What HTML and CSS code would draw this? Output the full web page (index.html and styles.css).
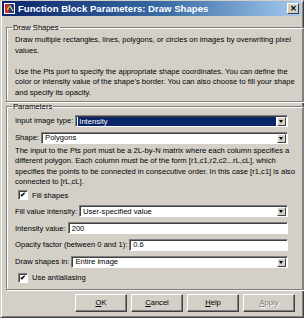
FILE: index.html
```html
<!DOCTYPE html>
<html lang="en">
<head>
    <meta charset="UTF-8">
    <title>Function Block Parameters: Draw Shapes</title>
    <link rel="stylesheet" href="styles.css">
</head>
<body>

    <div class="window">
        <div class="titlebar">
            <svg class="app-icon" width="11" height="11" viewBox="0 0 11 11">
                <rect x="0" y="0" width="11" height="11" fill="#ffffff"/>
                <rect x="1" y="1" width="9" height="9" fill="#2a3a8a"/>
                <rect x="1" y="1" width="4" height="9" fill="#c8302a"/>
                <path d="M3 7 L6 3 L9 8" stroke="#e8d040" stroke-width="1.2" fill="none"/>
            </svg>
            <span class="title">Function Block Parameters: Draw Shapes</span>
            <div class="close-btn">&#x2715;</div>
        </div>

        <div class="dialog">
            <fieldset class="group desc">
                <legend>Draw Shapes</legend>
                <div class="line">Draw multiple rectangles, lines, polygons, or circles on images by overwriting pixel</div>
                <div class="line">values.</div>
                <div class="line">&nbsp;</div>
                <div class="line">Use the Pts port to specify the appropriate shape coordinates. You can define the</div>
                <div class="line">color or intensity value of the shape's border. You can also choose to fill your shape</div>
                <div class="line">and specify its opacity.</div>
            </fieldset>

            <fieldset class="group params">
                <legend>Parameters</legend>

                <div class="row">
                    <span class="label">Input image type:</span>
                    <div class="combo selected"><span class="value">Intensity</span><span class="arrow"></span></div>
                </div>

                <div class="row">
                    <span class="label">Shape:</span>
                    <div class="combo"><span class="value">Polygons</span><span class="arrow"></span></div>
                </div>

                <div class="note">
                    <div class="line">The input to the Pts port must be a 2L-by-N matrix where each column specifies a</div>
                    <div class="line">different polygon. Each column must be of the form [r1,c1,r2,c2...rL,cL], which</div>
                    <div class="line">specifies the points to be connected in consecutive order. In this case [r1,c1] is also</div>
                    <div class="line">connected to [rL,cL].</div>
                </div>

                <div class="check-row">
                    <span class="checkbox">&#x2714;</span>
                    <span>Fill shapes</span>
                </div>

                <div class="row">
                    <span class="label">Fill value intensity:</span>
                    <div class="combo"><span class="value">User-specified value</span><span class="arrow"></span></div>
                </div>

                <div class="row">
                    <span class="label">Intensity value:</span>
                    <div class="edit">200</div>
                </div>

                <div class="row">
                    <span class="label">Opacity factor (between 0 and 1):</span>
                    <div class="edit">0.6</div>
                </div>

                <div class="row">
                    <span class="label">Draw shapes in:</span>
                    <div class="combo"><span class="value">Entire image</span><span class="arrow"></span></div>
                </div>

                <div class="check-row">
                    <span class="checkbox">&#x2714;</span>
                    <span>Use antialiasing</span>
                </div>
            </fieldset>

            <div class="buttons">
                <button class="btn"><u>O</u>K</button>
                <button class="btn"><u>C</u>ancel</button>
                <button class="btn"><u>H</u>elp</button>
                <button class="btn disabled"><u>A</u>pply</button>
            </div>
        </div>
    </div>

</body>
</html>
```

FILE: styles.css
```css
* {
    margin: 0;
    padding: 0;
    box-sizing: border-box;
    font-family: 'Liberation Sans', Arial, sans-serif;
}

body {
    width: 304px;
    height: 318px;
    background-color: #d4d0c8;
    overflow: hidden;
}

.window {
    width: 304px;
    height: 318px;
    display: flex;
    flex-direction: column;
    background-color: #d4d0c8;
    border: 1px solid #d4d0c8;
    border-right-color: #404040;
    border-bottom-color: #404040;
    box-shadow: inset 1px 1px 0 #ffffff, inset -1px -1px 0 #808080;
    padding: 0 2px 2px 1px;
}

.titlebar {
    flex: none;
    height: 15px;
    display: flex;
    align-items: center;
    padding: 0 2px 0 2px;
    background: linear-gradient(to right, #0a246a 0%, #3a6ea5 55%, #a6caf0 100%);
}

.app-icon {
    flex: none;
    margin-right: 3px;
}

.title {
    flex: 1;
    color: #ffffff;
    font-size: 9.6px;
    font-weight: bold;
    white-space: nowrap;
}

.close-btn {
    width: 12px;
    height: 11px;
    background-color: #d4d0c8;
    border: 1px solid #ffffff;
    border-right-color: #404040;
    border-bottom-color: #404040;
    font-size: 7.5px;
    font-weight: bold;
    line-height: 9px;
    text-align: center;
    color: #000000;
}

.dialog {
    flex: 1;
    display: flex;
    flex-direction: column;
    padding: 7px 3px 0 4px;
    font-size: 7.6px;
    color: #000000;
}

.group {
    border: 1px solid #808080;
    box-shadow: 1px 1px 0 #ffffff, inset 1px 1px 0 #ffffff;
    padding: 0 8px 0 8px;
}

.group legend {
    font-size: 7.6px;
    padding: 0 1px;
    margin-left: -3px;
}

.line {
    white-space: nowrap;
    line-height: 10.6px;
}

.note .line {
    line-height: 10.3px;
}

.desc {
    padding-top: 3px;
    padding-bottom: 2px;
}

.params {
    margin-top: 0;
    padding-top: 2px;
    padding-bottom: 3px;
}

.row {
    display: flex;
    align-items: center;
    height: 16.7px;
    padding-right: 7px;
}

.label {
    white-space: nowrap;
    margin-right: 2px;
}

.combo,
.edit {
    flex: 1;
    height: 12px;
    display: flex;
    align-items: center;
    background-color: #ffffff;
    border: 1px solid #808080;
    border-right-color: #ffffff;
    border-bottom-color: #ffffff;
    box-shadow: inset 1px 1px 0 #404040;
    padding-left: 3px;
}

.combo .value {
    flex: 1;
    white-space: nowrap;
}

.combo.selected .value {
    background-color: #0a246a;
    color: #ffffff;
    align-self: stretch;
    margin: 1px 0 0 -1px;
    padding-left: 1px;
    line-height: 9px;
}

.arrow {
    width: 9px;
    height: 9px;
    margin: 1px 1px 0 1px;
    background-color: #d4d0c8;
    border: 1px solid #ffffff;
    border-right-color: #404040;
    border-bottom-color: #404040;
    position: relative;
}

.arrow::after {
    content: "";
    position: absolute;
    left: 1px;
    top: 2px;
    border-left: 2.5px solid transparent;
    border-right: 2.5px solid transparent;
    border-top: 3px solid #000000;
}

.check-row {
    display: flex;
    align-items: center;
    height: 16px;
    gap: 4px;
    padding-left: 3px;
}

.checkbox {
    width: 10px;
    height: 10px;
    background-color: #ffffff;
    border: 1px solid #808080;
    border-right-color: #ffffff;
    border-bottom-color: #ffffff;
    box-shadow: inset 1px 1px 0 #404040;
    font-size: 7px;
    line-height: 8px;
    text-align: center;
    font-weight: bold;
}

.buttons {
    display: flex;
    justify-content: flex-end;
    gap: 4px;
    padding: 4px 3px 0 0;
}

.btn {
    width: 52px;
    height: 18px;
    font-size: 7.6px;
    background-color: #d4d0c8;
    border: 1px solid #ffffff;
    border-right-color: #404040;
    border-bottom-color: #404040;
    box-shadow: inset -1px -1px 0 #808080;
    color: #000000;
}

.btn.disabled {
    color: #808080;
    text-shadow: 1px 1px 0 #ffffff;
}
```
